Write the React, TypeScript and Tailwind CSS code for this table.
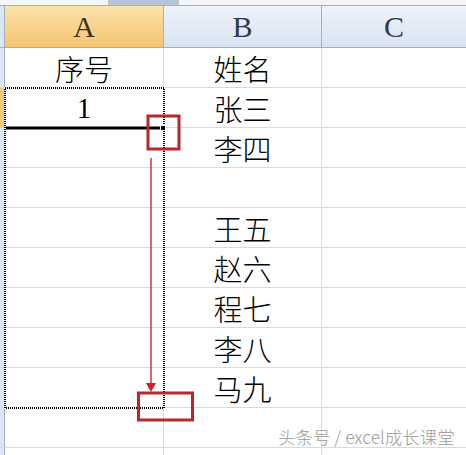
import React from "react";

const rows: [string, string][] = [
  ["序号", "姓名"],
  ["1", "张三"],
  ["", "李四"],
  ["", ""],
  ["", "王五"],
  ["", "赵六"],
  ["", "程七"],
  ["", "李八"],
  ["", "马九"],
  ["", ""],
  ["", ""],
];

const cjk = { fontFamily: '"Noto Sans CJK SC", sans-serif' };
const serif = { fontFamily: '"Liberation Serif", "Noto Sans CJK SC", serif' };

export default function App() {
  return (
    <div className="relative w-[466px] h-[455px] overflow-hidden bg-white">
      {/* top strip */}
      <div className="flex h-[6px] bg-[#f3f5f8] border-b border-[#9fb0c6]">
        <div className="w-[108px]" />
        <div className="w-[71px] bg-[#b7c4d6]" />
        <div className="flex-1" />
      </div>
      {/* header row */}
      <div className="flex h-[42px] border-b border-[#9fb0c6]">
        <div className="w-[5px] bg-[#dbe5f3] border-r border-[#9fb0c6]" />
        <div
          className="w-[159px] flex items-center justify-center bg-gradient-to-b from-[#fbe3aa] to-[#f5c471] border-r border-[#e3a84e] text-[30px] text-[#3a3320]"
          style={serif}
        >
          A
        </div>
        <div
          className="w-[158px] flex items-center justify-center bg-gradient-to-b from-[#eef3fa] to-[#d9e3f1] border-r border-[#9fb0c6] text-[30px] text-[#2f3a4a]"
          style={serif}
        >
          B
        </div>
        <div
          className="flex-1 flex items-center justify-center bg-gradient-to-b from-[#eef3fa] to-[#d9e3f1] text-[30px] text-[#2f3a4a]"
          style={serif}
        >
          C
        </div>
      </div>
      {/* body rows */}
      {rows.map(([a, b], i) => (
        <div key={i} className="flex h-[40px] border-b border-[#d4dbe6]">
          <div
            className={
              i === 1
                ? "w-[5px] bg-[#f6c878] border-r border-[#d9a24f]"
                : "w-[5px] bg-[#dbe5f3] border-r border-[#9fb0c6]"
            }
          />
          <div
            className={
              "w-[159px] flex items-center justify-center border-r border-[#d4dbe6] text-black " +
              (a === "1" ? "text-[29px]" : "text-[29px]")
            }
            style={a === "1" ? serif : cjk}
          >
            <span className="font-light leading-none pt-[2px]">{a}</span>
          </div>
          <div
            className="w-[158px] flex items-center justify-center border-r border-[#d4dbe6] text-[29px] text-black"
            style={cjk}
          >
            <span className="font-light leading-none pt-[2px]">{b}</span>
          </div>
          <div className="flex-1" />
        </div>
      ))}

      {/* overlays */}
      <svg
        className="absolute left-0 top-0 pointer-events-none"
        width="466"
        height="455"
        viewBox="0 0 466 455"
      >
        <rect x="5" y="88" width="159" height="320" fill="none" stroke="#ffffff" strokeWidth="2" />
        <rect
          x="5"
          y="88"
          width="159"
          height="320"
          fill="none"
          stroke="#000000"
          strokeWidth="2"
          strokeDasharray="1 1"
        />
        <rect x="6" y="126.5" width="154" height="3" fill="#000" />
        <rect x="160.5" y="125.5" width="5" height="5" fill="#000" stroke="#fff" strokeWidth="1" />
        <rect x="148" y="116" width="31" height="33" fill="none" stroke="#b8272b" strokeWidth="3" />
        <line x1="151" y1="158" x2="151" y2="385" stroke="#c0393c" strokeWidth="1.5" />
        <polygon points="146,383 156,383 151,392" fill="#d21f26" />
        <rect x="138.5" y="393" width="54" height="27" fill="none" stroke="#b8272b" strokeWidth="3" />
      </svg>

      {/* watermark */}
      <div
        className="absolute left-[278px] top-[428px] text-[17.5px] leading-none font-light text-[#9a9a9a] whitespace-nowrap"
        style={{ fontFamily: '"Noto Sans CJK SC", sans-serif', textShadow: "0 0 2px #fff" }}
      >
        头条号 / excel成长课堂
      </div>
    </div>
  );
}
